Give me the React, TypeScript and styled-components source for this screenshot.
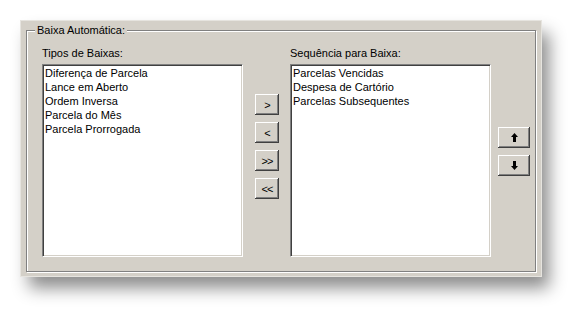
import styled, { createGlobalStyle } from 'styled-components';

const GlobalStyle = createGlobalStyle`
  html, body {
    margin: 0;
    padding: 0;
    background: #ffffff;
  }
  body {
    font-family: "Liberation Sans", Arial, sans-serif;
    font-size: 11px;
    color: #000000;
  }
`;

const Page = styled.div`
  padding: 21px 0 0 21px;
  width: 585px;
  height: 318px;
  box-sizing: border-box;
`;

const Panel = styled.div`
  width: 520px;
  box-sizing: border-box;
  padding: 9px 5px 4px 5px;
  background: #d4d0c8;
  box-shadow: 0 0 0 1px #e6e4df, 8px 12px 16px rgba(0, 0, 0, 0.45);
`;

const GroupBox = styled.div`
  position: relative;
  box-sizing: border-box;
  width: 510px;
  padding: 15px 5px 14px 15px;
  border: 1px solid #808080;
  box-shadow: inset 1px 1px 0 #ffffff, 1px 1px 0 #ffffff;
`;

const Legend = styled.span`
  position: absolute;
  top: -7px;
  left: 8px;
  padding: 0 2px;
  line-height: 13px;
  background: #d4d0c8;
`;

const Row = styled.div`
  display: flex;
  align-items: flex-start;
`;

const ListColumn = styled.div<{ $left?: number }>`
  display: flex;
  flex-direction: column;
  width: 201px;
  margin-left: ${({ $left = 0 }) => $left}px;
`;

const Label = styled.div`
  line-height: 14px;
  height: 14px;
  margin-bottom: 4px;
  white-space: nowrap;
`;

const ListBox = styled.div`
  box-sizing: border-box;
  height: 193px;
  background: #ffffff;
  border-style: solid;
  border-width: 1px;
  border-color: #808080 #ffffff #ffffff #808080;
  box-shadow: inset 1px 1px 0 #404040, inset -1px -1px 0 #d4d0c8;
  padding: 1px 2px;
`;

const ListItem = styled.div`
  line-height: 14px;
  height: 14px;
  white-space: nowrap;
`;

const ButtonColumn = styled.div<{ $top: number; $left: number }>`
  display: flex;
  flex-direction: column;
  gap: 7px;
  padding-top: ${({ $top }) => $top}px;
  margin-left: ${({ $left }) => $left}px;
`;

const Win95Button = styled.button<{ $width: number }>`
  width: ${({ $width }) => $width}px;
  height: 21px;
  padding: 0;
  margin: 0;
  border: none;
  background: #d4d0c8;
  font-family: "Liberation Sans", Arial, sans-serif;
  font-size: 11px;
  color: #000000;
  display: flex;
  align-items: center;
  justify-content: center;
  box-shadow: inset -1px -1px 0 #404040, inset 1px 1px 0 #ffffff,
    inset -2px -2px 0 #808080, inset 2px 2px 0 #d4d0c8;
`;

const Glyph = styled.span`
  letter-spacing: -1px;
  line-height: 11px;
  margin-top: 1px;
`;

const ArrowUp = () => (
  <svg width="7" height="9" viewBox="0 0 7 9">
    <path d="M3.5 0 L7 4 L5 4 L5 9 L2 9 L2 4 L0 4 Z" fill="#000" />
  </svg>
);

const ArrowDown = () => (
  <svg width="7" height="9" viewBox="0 0 7 9">
    <path d="M2 0 L5 0 L5 5 L7 5 L3.5 9 L0 5 L2 5 Z" fill="#000" />
  </svg>
);

const tipos = [
  'Diferença de Parcela',
  'Lance em Aberto',
  'Ordem Inversa',
  'Parcela do Mês',
  'Parcela Prorrogada',
];

const sequencia = ['Parcelas Vencidas', 'Despesa de Cartório', 'Parcelas Subsequentes'];

export default function App() {
  return (
    <Page>
      <GlobalStyle />
      <Panel>
        <GroupBox>
          <Legend>Baixa Automática:</Legend>
          <Row>
            <ListColumn>
              <Label>Tipos de Baixas:</Label>
              <ListBox>
                {tipos.map((t) => (
                  <ListItem key={t}>{t}</ListItem>
                ))}
              </ListBox>
            </ListColumn>
            <ButtonColumn $top={48} $left={12}>
              <Win95Button $width={24}><Glyph>&gt;</Glyph></Win95Button>
              <Win95Button $width={24}><Glyph>&lt;</Glyph></Win95Button>
              <Win95Button $width={24}><Glyph>&gt;&gt;</Glyph></Win95Button>
              <Win95Button $width={24}><Glyph>&lt;&lt;</Glyph></Win95Button>
            </ButtonColumn>
            <ListColumn $left={11}>
              <Label>Sequência para Baixa:</Label>
              <ListBox>
                {sequencia.map((s) => (
                  <ListItem key={s}>{s}</ListItem>
                ))}
              </ListBox>
            </ListColumn>
            <ButtonColumn $top={81} $left={7}>
              <Win95Button $width={32}><ArrowUp /></Win95Button>
              <Win95Button $width={32}><ArrowDown /></Win95Button>
            </ButtonColumn>
          </Row>
        </GroupBox>
      </Panel>
    </Page>
  );
}
